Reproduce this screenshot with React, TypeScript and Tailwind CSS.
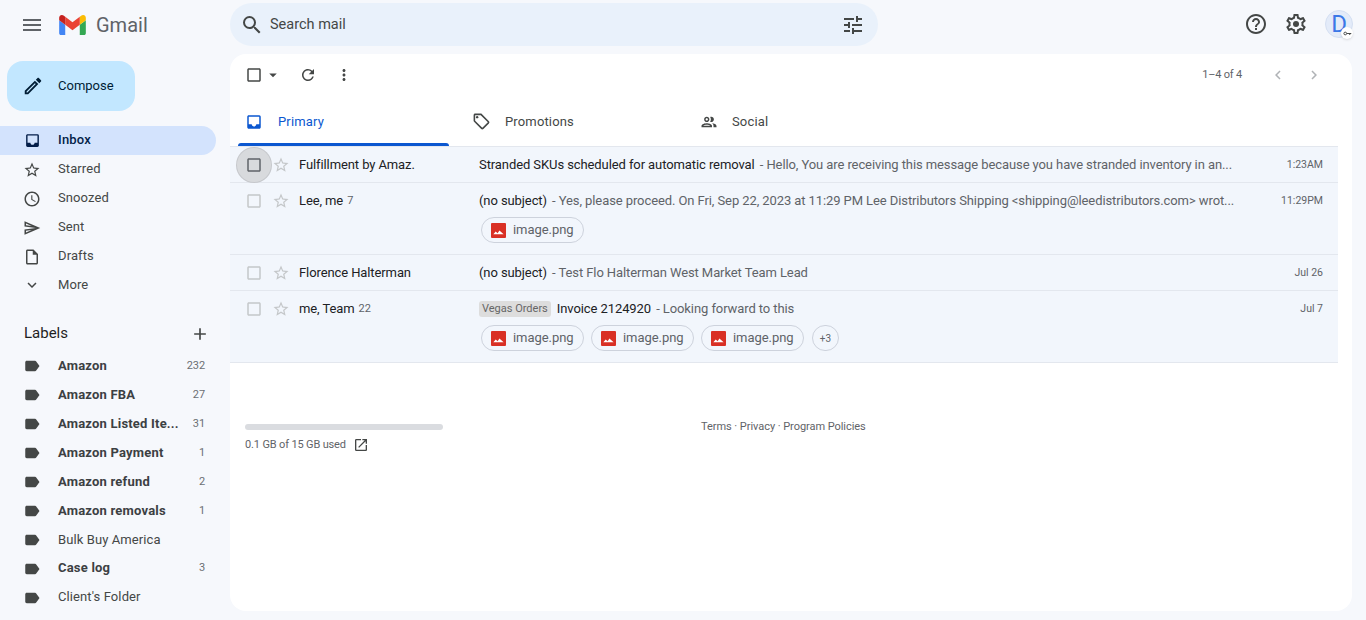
import {
  MdMenu,
  MdSearch,
  MdTune,
  MdHelpOutline,
  MdOutlineEdit,
  MdInbox,
  MdStarBorder,
  MdAccessTime,
  MdOutlineSend,
  MdOutlineInsertDriveFile,
  MdExpandMore,
  MdAdd,
  MdLabel,
  MdCheckBoxOutlineBlank,
  MdArrowDropDown,
  MdRefresh,
  MdMoreVert,
  MdChevronLeft,
  MdChevronRight,
  MdOutlineLocalOffer,
  MdOutlinePeople,
  MdOpenInNew,
} from "react-icons/md";
import type { IconType } from "react-icons";

const nav: { name: string; icon: IconType }[] = [
  { name: "Starred", icon: MdStarBorder },
  { name: "Snoozed", icon: MdAccessTime },
  { name: "Sent", icon: MdOutlineSend },
  { name: "Drafts", icon: MdOutlineInsertDriveFile },
];

const labels = [
  { name: "Amazon", count: "232", bold: true },
  { name: "Amazon FBA", count: "27", bold: true },
  { name: "Amazon Listed Ite...", count: "31", bold: true },
  { name: "Amazon Payment", count: "1", bold: true },
  { name: "Amazon refund", count: "2", bold: true },
  { name: "Amazon removals", count: "1", bold: true },
  { name: "Bulk Buy America", count: "", bold: false },
  { name: "Case log", count: "3", bold: true },
  { name: "Client's Folder", count: "", bold: false },
];

const emails = [
  {
    sender: "Fulfillment by Amaz.",
    count: "",
    tag: "",
    subject: "Stranded SKUs scheduled for automatic removal",
    snippet: "Hello, You are receiving this message because you have stranded inventory in an...",
    time: "1:23AM",
    chips: 0,
    hover: true,
  },
  {
    sender: "Lee, me",
    count: "7",
    tag: "",
    subject: "(no subject)",
    snippet: "Yes, please proceed. On Fri, Sep 22, 2023 at 11:29 PM Lee Distributors Shipping <shipping@leedistributors.com> wrot...",
    time: "11:29PM",
    chips: 1,
    hover: false,
  },
  {
    sender: "Florence Halterman",
    count: "",
    tag: "",
    subject: "(no subject)",
    snippet: "Test Flo Halterman West Market Team Lead",
    time: "Jul 26",
    chips: 0,
    hover: false,
  },
  {
    sender: "me, Team",
    count: "22",
    tag: "Vegas Orders",
    subject: "Invoice 2124920",
    snippet: "Looking forward to this",
    time: "Jul 7",
    chips: 3,
    hover: false,
  },
];

function GmailLogo() {
  return (
    <svg viewBox="52 42 88 66" className="h-5 w-[27px]">
      <path fill="#4285f4" d="M58 108h14V74L52 59v43c0 3.32 2.69 6 6 6" />
      <path fill="#34a853" d="M120 108h14c3.32 0 6-2.69 6-6V59l-20 15" />
      <path fill="#fbbc04" d="M120 48v26l20-15v-8c0-7.42-8.47-11.65-14.4-7.2" />
      <path fill="#ea4335" d="M72 74V48l24 18 24-18v26L96 92" />
      <path fill="#c5221f" d="M52 51v8l20 15V48l-5.6-4.2c-5.94-4.45-14.4-.22-14.4 7.2" />
    </svg>
  );
}

function GearIcon() {
  return (
    <svg viewBox="0 0 24 24" fill="#444746" className="ml-4 h-6 w-6">
      <path d="M19.43 12.98c.04-.32.07-.64.07-.98 0-.34-.03-.66-.07-.98l2.11-1.65c.19-.15.24-.42.12-.64l-2-3.46c-.09-.16-.26-.25-.44-.25-.06 0-.12.01-.17.03l-2.49 1c-.52-.4-1.08-.73-1.69-.98l-.38-2.65C14.46 2.18 14.25 2 14 2h-4c-.25 0-.46.18-.49.42l-.38 2.65c-.61.25-1.17.59-1.69.98l-2.49-1c-.06-.02-.12-.03-.18-.03-.17 0-.34.09-.43.25l-2 3.46c-.13.22-.07.49.12.64l2.11 1.65c-.04.32-.07.65-.07.98 0 .33.03.66.07.98l-2.11 1.65c-.19.15-.24.42-.12.64l2 3.46c.09.16.26.25.44.25.06 0 .12-.01.17-.03l2.49-1c.52.4 1.08.73 1.69.98l.38 2.65c.03.24.24.42.49.42h4c.25 0 .46-.18.49-.42l.38-2.65c.61-.25 1.17-.59 1.69-.98l2.49 1c.06.02.12.03.18.03.17 0 .34-.09.43-.25l2-3.46c.12-.22.07-.49-.12-.64l-2.11-1.65zm-1.98-1.71c.04.31.05.52.05.73 0 .21-.02.43-.05.73l-.14 1.13.89.7 1.08.84-.7 1.21-1.27-.51-1.04-.42-.9.68c-.43.32-.84.56-1.25.73l-1.06.43-.16 1.13-.2 1.35h-1.4l-.19-1.35-.16-1.13-1.06-.43c-.43-.18-.83-.41-1.23-.71l-.91-.7-1.06.43-1.27.51-.7-1.21 1.08-.84.89-.7-.14-1.13c-.03-.31-.05-.54-.05-.74s.02-.43.05-.73l.14-1.13-.89-.7-1.08-.84.7-1.21 1.27.51 1.04.42.9-.68c.43-.32.84-.56 1.25-.73l1.06-.43.16-1.13.2-1.35h1.39l.19 1.35.16 1.13 1.06.43c.43.18.83.41 1.23.71l.91.7 1.06-.43 1.27-.51.7 1.21-1.07.85-.89.7.14 1.13z" />
      <circle cx="12" cy="12" r="3" />
    </svg>
  );
}

function ImageChip() {
  return (
    <div className="flex h-[26px] w-[103px] items-center gap-[7px] rounded-full border border-[#cdd2dc] pl-[9px]">
      <svg viewBox="0 0 16 16" className="h-[15px] w-[15px]">
        <rect width="16" height="16" rx="1" fill="#d93025" />
        <path fill="#fff" d="M2.5 12l2.5-3 2 2 2-3 4.5 4z" />
      </svg>
      <span className="text-[13px] tracking-[-0.05px] text-[#5f6368]">image.png</span>
    </div>
  );
}

function EmailRow({ email }: { email: (typeof emails)[number] }) {
  return (
    <div className="flex border-b border-[#e3e7ee] bg-[#f2f6fc] pr-[15px]">
      <div className="flex h-[35px] w-[249px] shrink-0 items-center pl-[15px]">
        <div
          className={
            email.hover
              ? "relative flex h-[18px] w-[18px] items-center justify-center rounded-full bg-[#d8dadd] text-[#5f6368] shadow-[0_0_0_8px_#d8dadd,0_0_0_9px_#c6c8cc]"
              : "flex h-[18px] w-[18px] items-center justify-center text-[#c4c7c9]"
          }
        >
          <MdCheckBoxOutlineBlank className="h-[18px] w-[18px]" />
        </div>
        <MdStarBorder className="ml-[9px] h-[18px] w-[18px] text-[#c4c7c9]" />
        <span className="ml-[9px] pt-px text-[13px] tracking-[-0.1px] text-[#202124]">{email.sender}</span>
        {email.count && <span className="ml-[4px] pt-[2px] text-[11px] text-[#5f6368]">{email.count}</span>}
      </div>
      <div className="min-w-0 flex-1">
        <div className="flex h-[35px] items-center pt-px">
          {email.tag && (
            <span className="mr-[6px] shrink-0 rounded-[3px] bg-[#dddddd] px-[3px] text-[11px] leading-[16px] text-[#666666]">
              {email.tag}
            </span>
          )}
          <span className="min-w-0 flex-1 truncate text-[13px] tracking-[-0.09px] text-[#5f6368]">
            <span className="text-[#202124]">{email.subject}</span>
            <span className="ml-[2px]"> - </span>
            {email.snippet}
          </span>
          <span className="w-[80px] shrink-0 text-right text-[10.5px] text-[#5f6368]">{email.time}</span>
        </div>
        {email.chips > 0 && (
          <div className="-mt-px flex h-[37px] items-start gap-[7px] pl-[2px]">
            {Array.from({ length: email.chips }).map((_, i) => (
              <ImageChip key={i} />
            ))}
            {email.chips === 3 && (
              <div className="ml-px flex h-[26px] w-[27px] items-center justify-center rounded-full border border-[#cdd2dc] text-[10px] text-[#5f6368]">
                +3
              </div>
            )}
          </div>
        )}
      </div>
    </div>
  );
}

export default function App() {
  return (
    <div className="flex h-screen flex-col overflow-hidden bg-[#f6f8fc] font-['Roboto',sans-serif]">
      {/* Top bar */}
      <header className="flex h-[54px] shrink-0 items-start">
        <div className="flex h-[50px] w-[230px] shrink-0 items-center">
          <MdMenu className="ml-[20px] h-6 w-6 text-[#5f6368]" />
          <div className="ml-[15px]">
            <GmailLogo />
          </div>
          <span className="ml-[10px] text-[20px] text-[#5f6368]">Gmail</span>
        </div>
        <div className="mt-[3px] flex h-[43px] w-[648px] items-center rounded-full bg-[#e9f1fb] pl-[10px] pr-[13px]">
          <MdSearch className="h-6 w-6 text-[#444746]" />
          <span className="ml-[6px] text-[14.5px] text-[#444746]">Search mail</span>
          <MdTune className="ml-auto h-6 w-6 text-[#444746]" />
        </div>
        <div className="ml-auto mt-[10px] flex items-center pr-[13px]">
          <MdHelpOutline className="h-6 w-6 text-[#444746]" />
          <GearIcon />
          <div className="relative ml-[17px] flex h-[28px] w-[28px] items-center justify-center rounded-full border border-[#d5e0f2] bg-[#e3ebf9] text-[24px] leading-none text-[#3b78e7]">
            D
            <div className="absolute -bottom-[2px] -right-[1px] flex h-[12px] w-[12px] items-center justify-center rounded-full bg-white shadow-sm">
              <svg viewBox="0 0 12 12" fill="none" stroke="#444746" strokeWidth="1.3" className="h-[9px] w-[9px]">
                <circle cx="3" cy="6" r="1.8" />
                <path d="M5 6h6M9 6v2" />
              </svg>
            </div>
          </div>
        </div>
      </header>

      <div className="flex min-h-0 flex-1 pb-[9px] pr-[14px]">
        {/* Sidebar */}
        <aside className="w-[230px] shrink-0 overflow-hidden">
          <div className="ml-[7px] mt-[7px] flex h-[50px] w-[128px] items-center rounded-2xl bg-[#c2e7ff] pl-[15px]">
            <MdOutlineEdit className="h-[22px] w-[22px] text-[#001d35]" />
            <span className="ml-[14px] text-[13px] text-[#001d35]">Compose</span>
          </div>
          <nav className="mt-[15px]">
            <div className="flex h-[29px] w-[216px] items-center rounded-r-full bg-[#d3e3fd] pl-[24px]">
              <MdInbox className="h-[17px] w-[17px] text-[#041e49]" />
              <span className="ml-[17px] pb-px text-[13px] font-medium tracking-[0.2px] text-[#041e49]">Inbox</span>
            </div>
            {nav.map(({ name, icon: Icon }) => (
              <div key={name} className="flex h-[29px] items-center pl-[23px]">
                <Icon className="h-[18px] w-[18px] text-[#444746]" />
                <span className="ml-[17px] pb-px text-[13px] tracking-[0.1px] text-[#444746]">{name}</span>
              </div>
            ))}
            <div className="flex h-[28px] items-center pl-[23px]">
              <MdExpandMore className="h-[18px] w-[18px] text-[#444746]" />
              <span className="ml-[17px] pb-px text-[13px] tracking-[0.1px] text-[#444746]">More</span>
            </div>
          </nav>
          <div className="mt-[21px] flex h-[28px] items-center pl-[24px] pr-[20px]">
            <span className="pb-px text-[15px] text-[#1f1f1f]">Labels</span>
            <MdAdd className="ml-auto h-[20px] w-[20px] text-[#444746]" />
          </div>
          <div className="mt-[4px]">
            {labels.map((l) => (
              <div key={l.name} className="flex h-[28.9px] items-center pl-[23px] pr-[25px]">
                <MdLabel className="h-[18px] w-[18px] text-[#444746]" />
                <span
                  className={
                    l.bold
                      ? "ml-[17px] pb-px text-[13px] font-bold tracking-[0.2px] text-[#3c4043]"
                      : "ml-[17px] pb-px text-[13px] tracking-[0.1px] text-[#444746]"
                  }
                >
                  {l.name}
                </span>
                <span className="ml-auto text-[11px] tracking-[-0.1px] text-[#6b6f73]">{l.count}</span>
              </div>
            ))}
          </div>
        </aside>

        {/* Main panel */}
        <main className="flex-1 overflow-hidden rounded-2xl bg-white pr-[14px]">
          <div className="flex h-[41px] items-center pl-[15px] pr-[15px]">
            <MdCheckBoxOutlineBlank className="h-[18px] w-[18px] text-[#444746]" />
            <MdArrowDropDown className="ml-px h-[18px] w-[18px] text-[#444746]" />
            <MdRefresh className="ml-[17px] h-[18px] w-[18px] text-[#444746]" />
            <MdMoreVert className="ml-[18px] h-[18px] w-[18px] text-[#444746]" />
            <span className="ml-auto pt-[2px] text-[11px] tracking-[-0.2px] text-[#5f6368]">1–4 of 4</span>
            <MdChevronLeft className="ml-[27px] h-[18px] w-[18px] text-[#b0b3b6]" />
            <MdChevronRight className="ml-[18px] h-[18px] w-[18px] text-[#b0b3b6]" />
          </div>

          <div className="flex h-[52px] border-b border-[#e3e7ee] pt-[2px]">
            <div className="relative flex w-[219px] items-center pl-[15px]">
              <MdInbox className="h-[18px] w-[18px] text-[#0b57d0]" />
              <span className="ml-[15px] text-[13px] tracking-[0.15px] text-[#0b57d0]">Primary</span>
              <div className="absolute bottom-0 left-[8px] right-0 h-[3px] rounded-t-[3px] bg-[#0b57d0]" />
            </div>
            <div className="flex w-[228px] items-center pl-[23px]">
              <MdOutlineLocalOffer className="h-[19px] w-[19px] text-[#444746]" />
              <span className="ml-[14px] text-[13px] tracking-[0.15px] text-[#444746]">Promotions</span>
            </div>
            <div className="flex items-center pl-[23px]">
              <MdOutlinePeople className="h-[18px] w-[18px] text-[#444746]" />
              <span className="ml-[14px] text-[13px] tracking-[0.15px] text-[#444746]">Social</span>
            </div>
          </div>

          {emails.map((email) => (
            <EmailRow key={email.sender} email={email} />
          ))}

          <div className="flex pl-[15px] pr-[15px] pt-[61px]">
            <div className="w-[198px]">
              <div className="h-[6px] rounded-full bg-[#dadce0]" />
              <div className="mt-[7px] flex items-center text-[11px] tracking-[-0.15px] text-[#5f6368]">
                0.1 GB of 15 GB used
                <MdOpenInNew className="ml-[7px] h-[16px] w-[16px] text-[#444746]" />
              </div>
            </div>
            <div className="ml-[258px] -mt-[5px] text-[11px] tracking-[-0.05px] text-[#5f6368]">
              Terms · Privacy · Program Policies
            </div>
          </div>
        </main>
      </div>
    </div>
  );
}
